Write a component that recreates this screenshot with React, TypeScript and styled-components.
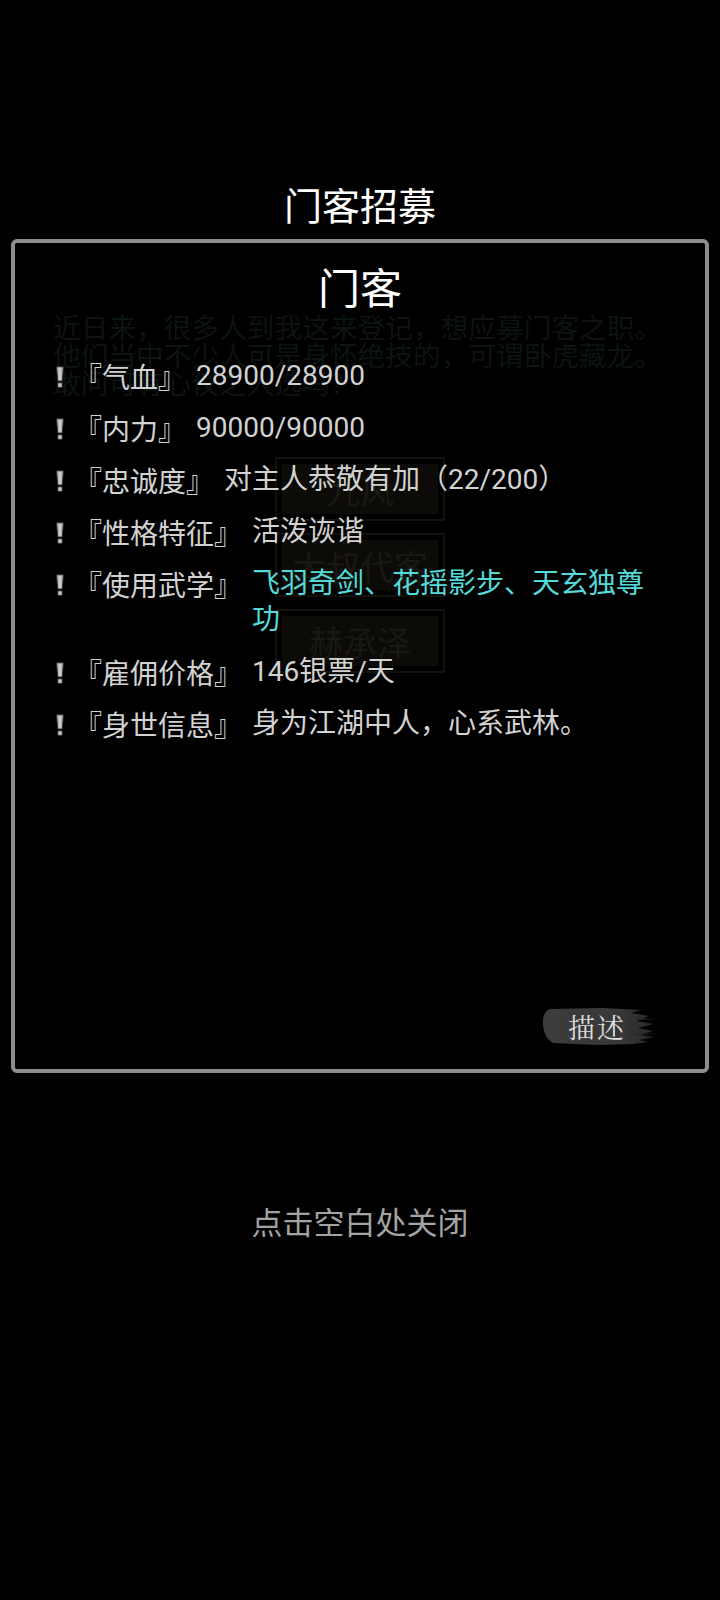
import React from 'react';
import styled, { createGlobalStyle } from 'styled-components';

const GlobalStyle = createGlobalStyle`
  html, body {
    margin: 0;
    padding: 0;
    background: #000;
  }
  body {
    font-family: Roboto, "Noto Sans CJK SC", sans-serif;
  }
`;

const Screen = styled.div`
  width: 720px;
  height: 1600px;
  box-sizing: border-box;
  padding-top: 182px;
  display: flex;
  flex-direction: column;
  background: #000;
`;

const PageTitle = styled.h1`
  margin: 0;
  text-align: center;
  color: #fff;
  font-size: 38px;
  font-weight: 400;
  line-height: 50px;
`;

const Panel = styled.section`
  position: relative;
  margin: 7px 11px 0;
  height: 834px;
  box-sizing: border-box;
  border: 4px solid #8d8d8d;
  border-radius: 6px;
  display: flex;
  flex-direction: column;
  overflow: hidden;
`;

/* dimmed screen that sits under the dialog */
const Backdrop = styled.div`
  position: absolute;
  inset: 0;
  padding-top: 69px;
  display: flex;
  flex-direction: column;
  pointer-events: none;
`;

const DimText = styled.div`
  padding-left: 38px;
  color: #0c1313;
  font-family: "Noto Sans CJK SC", sans-serif;
  font-size: 27.7px;
  line-height: 28px;
  white-space: nowrap;
`;

const DimButtons = styled.div`
  margin-top: 61px;
  display: flex;
  flex-direction: column;
  align-items: center;
  gap: 12px;
`;

const DimButton = styled.div`
  width: 170px;
  height: 64px;
  box-sizing: border-box;
  border: 2px solid #12110c;
  padding: 5px;
  display: flex;

  span {
    flex: 1;
    display: flex;
    align-items: center;
    justify-content: center;
    background: #0c0b08;
    color: #1a1813;
    font-family: "Noto Sans CJK SC", sans-serif;
    font-size: 34px;
  }
`;

const Content = styled.div`
  position: relative;
  flex: 1;
  display: flex;
  flex-direction: column;
`;

const Heading = styled.h2`
  margin: 22px 0 0;
  text-align: center;
  color: #fff;
  font-size: 42px;
  font-weight: 400;
  line-height: 50px;
`;

const StatList = styled.ul`
  list-style: none;
  margin: 43px 0 0;
  padding: 0 40px 0 40px;
  display: flex;
  flex-direction: column;
  gap: 16px;
`;

const StatRow = styled.li`
  display: flex;
  align-items: flex-start;
  font-size: 28px;
  line-height: 36px;
  color: #d2d2d2;
`;

const Mark = styled.span`
  flex: none;
  width: 10px;
  height: 36px;
  margin-right: 9px;
  display: flex;
  align-items: center;
  padding-top: 2px;
  box-sizing: border-box;
`;

const Label = styled.span`
  flex: none;
  margin-right: 10px;
  white-space: nowrap;
  font-family: "Noto Sans CJK SC", sans-serif;
`;

const Value = styled.span<{ $accent?: boolean }>`
  flex: 1;
  min-width: 0;
  color: ${(p) => (p.$accent ? '#55dada' : '#d2d2d2')};
`;

const Footer = styled.div`
  margin-top: auto;
  padding: 0 48px 22px 0;
  display: flex;
  justify-content: flex-end;
`;

const BrushButton = styled.button`
  position: relative;
  width: 116px;
  height: 42px;
  padding: 0;
  border: 0;
  background: none;
  display: flex;
  align-items: center;
  justify-content: center;
  cursor: pointer;

  svg {
    position: absolute;
    inset: 0;
  }

  span {
    position: relative;
    color: #dcdcdc;
    font-family: "Noto Serif CJK SC", "Noto Sans CJK SC", serif;
    font-size: 27px;
    letter-spacing: 2px;
    margin-left: -4px;
  }
`;

const CloseHint = styled.div`
  margin-top: 131px;
  text-align: center;
  color: #a3a3a3;
  font-size: 31px;
  line-height: 40px;
`;

const ExclaimIcon = () => (
  <svg width="10" height="22" viewBox="0 0 10 22">
    <defs>
      <linearGradient id="ex" x1="0" y1="0" x2="1" y2="0">
        <stop offset="0" stopColor="#8f8f8f" />
        <stop offset="0.5" stopColor="#d6d6d6" />
        <stop offset="1" stopColor="#858585" />
      </linearGradient>
    </defs>
    <path d="M1.4 0.8 L8.6 0.8 L7.2 15 L2.8 15 Z" fill="url(#ex)" stroke="#2a2a2a" strokeWidth="0.9" />
    <rect x="2.6" y="16.8" width="4.8" height="4.6" rx="0.8" fill="url(#ex)" stroke="#2a2a2a" strokeWidth="0.9" />
  </svg>
);

const BrushStroke = () => (
  <svg width="116" height="42" viewBox="0 0 116 42">
    <defs>
      <linearGradient id="ink" x1="0" y1="0" x2="1" y2="0">
        <stop offset="0" stopColor="#3c3c3c" />
        <stop offset="0.7" stopColor="#383838" />
        <stop offset="1" stopColor="#262626" />
      </linearGradient>
    </defs>
    <path
      d="M9 4 Q1 7 2 20 Q3 33 12 38 L58 40 L92 39 L108 37 L98 35 L114 32 L99 30 L112 26 L97 23 L113 19 L96 16 L108 11 L90 8 L100 5 L62 3 Z"
      fill="url(#ink)"
    />
    <path d="M94 13 L115 14 L96 15 Z" fill="#2c2c2c" />
    <path d="M92 28 L116 29 L94 30 Z" fill="#2a2a2a" />
  </svg>
);

type Stat = { label: string; value: string; accent?: boolean };

const stats: Stat[] = [
  { label: '『气血』', value: '28900/28900' },
  { label: '『内力』', value: '90000/90000' },
  { label: '『忠诚度』', value: '对主人恭敬有加（22/200）' },
  { label: '『性格特征』', value: '活泼诙谐' },
  { label: '『使用武学』', value: '飞羽奇剑、花摇影步、天玄独尊功', accent: true },
  { label: '『雇佣价格』', value: '146银票/天' },
  { label: '『身世信息』', value: '身为江湖中人，心系武林。' },
];

const introLines = [
  '近日来，很多人到我这来登记，想应募门客之职。',
  '他们当中不少人可是身怀绝技的，可谓卧虎藏龙。',
  '敢问可有心仪之人选吗？',
];

const candidates = ['九风', '大叔代客', '赫承泽'];

export default function App() {
  return (
    <>
      <GlobalStyle />
      <Screen>
        <PageTitle>门客招募</PageTitle>
        <Panel>
          <Backdrop>
            {introLines.map((line) => (
              <DimText key={line}>{line}</DimText>
            ))}
            <DimButtons>
              {candidates.map((name) => (
                <DimButton key={name}>
                  <span>{name}</span>
                </DimButton>
              ))}
            </DimButtons>
          </Backdrop>
          <Content>
            <Heading>门客</Heading>
            <StatList>
              {stats.map((s) => (
                <StatRow key={s.label}>
                  <Mark>
                    <ExclaimIcon />
                  </Mark>
                  <Label>{s.label}</Label>
                  <Value $accent={s.accent}>{s.value}</Value>
                </StatRow>
              ))}
            </StatList>
            <Footer>
              <BrushButton>
                <BrushStroke />
                <span>描述</span>
              </BrushButton>
            </Footer>
          </Content>
        </Panel>
        <CloseHint>点击空白处关闭</CloseHint>
      </Screen>
    </>
  );
}
